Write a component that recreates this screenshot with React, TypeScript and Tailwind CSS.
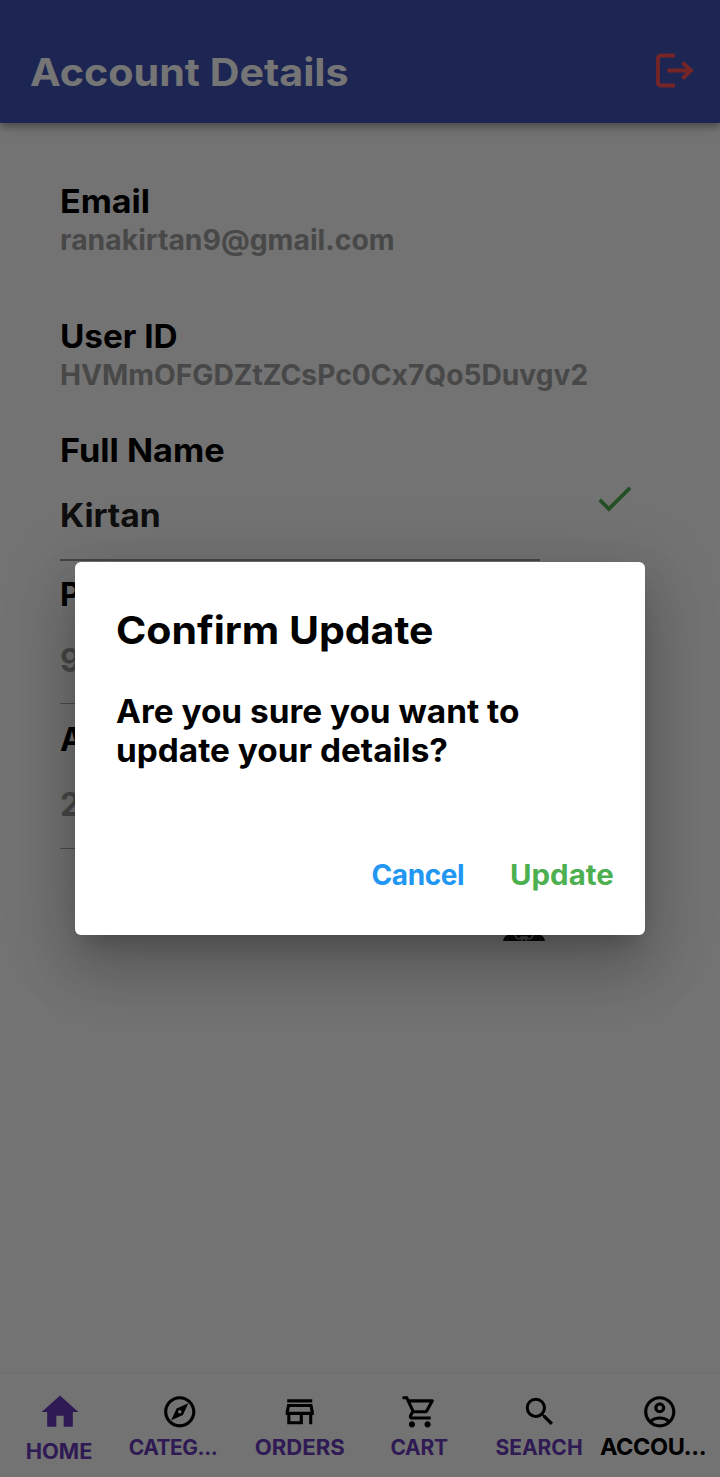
import type { ReactNode } from "react";
import {
  MdCheck,
  MdHome,
  MdOutlineAccountCircle,
  MdOutlineExplore,
  MdOutlineShoppingCart,
  MdOutlineStore,
  MdSearch,
} from "react-icons/md";

function LogoutIcon() {
  return (
    <svg width="45" height="45" viewBox="0 0 45 45" fill="none" stroke="#ff5252" strokeWidth="3.8">
      <path d="M23 6.500H9.500Q6 6.500 6 9.500V33.500Q6 36.500 9.500 36.500H23" />
      <path d="M15.500 21.500H39.500M30.500 13.500L39 21.500L30.500 29.500" />
    </svg>
  );
}

function NavItem({ icon, children }: { icon: ReactNode; children: ReactNode }) {
  return (
    <div className="flex w-[120px] flex-col items-center pt-[19px] text-black">
      {icon}
      {children}
    </div>
  );
}

export default function App() {
  return (
    <div className="relative flex h-[1477px] w-[720px] flex-col overflow-hidden bg-[#fafafa] font-['Inter',sans-serif] font-bold whitespace-nowrap text-black">
      <header className="relative flex h-[123px] shrink-0 items-start justify-between bg-[#3f51b5] pt-[49px] pr-[23px] pl-[30px] shadow-[0_3px_6px_-1.5px_rgba(0,0,0,0.2),0_6px_7.5px_rgba(0,0,0,0.14),0_1.5px_15px_rgba(0,0,0,0.12)]">
        <h1 className="origin-left scale-x-[1.07] text-[38.5px] leading-[46px] text-white">Account Details</h1>
        <LogoutIcon />
      </header>

      <main className="flex grow flex-col pl-[60px]">
        <section className="pt-[59px]">
          <h2 className="origin-left scale-x-[1.065] text-[32px] leading-[40px]">Email</h2>
          <p className="origin-left scale-x-[1.012] text-[28px] leading-[36px] text-[#9e9e9e]">ranakirtan9@gmail.com</p>
        </section>
        <section className="pt-[59px]">
          <h2 className="origin-left scale-x-[1.04] text-[32px] leading-[40px]">User ID</h2>
          <p className="origin-left scale-x-[1.006] text-[28px] leading-[36px] text-[#9e9e9e]">
            HVMmOFGDZtZCsPc0Cx7Qo5Duvgv2
          </p>
        </section>
        <section className="flex h-[168px] pt-[38px]">
          <div className="h-[130px] w-[480px] border-b-2 border-[#9a9a9a]">
            <h2 className="origin-left scale-x-[1.07] text-[32px] leading-[40px]">Full Name</h2>
            <p className="origin-left scale-x-[1.05] pt-[25px] text-[32px] leading-[40px] text-[#202020]">Kirtan</p>
          </div>
          <MdCheck className="mt-[45px] ml-[52px] text-[#4caf50]" size={45} />
        </section>
        <section className="mt-[14px] h-[129px] w-[480px] border-b border-[#a8a8a8]">
          <h2 className="text-[32px] leading-[40px]">P</h2>
          <p className="pt-[26px] text-[32px] leading-[40px] text-[#9e9e9e]">9</p>
        </section>
        <section className="mt-[16px] h-[129px] w-[480px] border-b border-[#a8a8a8]">
          <h2 className="text-[32px] leading-[40px]">A</h2>
          <p className="pt-[25px] text-[32px] leading-[40px] text-[#9e9e9e]">2</p>
        </section>
        <svg className="mt-[71px] ml-[443px]" width="42" height="21" viewBox="0 0 42 21">
          <path d="M0 21Q0.500 17 4 15H38Q41.500 17 42 21Z" fill="#1c1c1c" />
          <path
            d="M12 15Q13 19 17 19L18 17H24L25 19Q29 19 30 15M19 21V18.500H23V21"
            fill="none"
            stroke="#a0a0a0"
            strokeWidth="1.500"
          />
        </svg>
      </main>

      <nav className="flex h-[103px] shrink-0 bg-[#fafafa] text-[#673ab7] shadow-[0_-1px_3px_rgba(0,0,0,0.06)]">
        <NavItem icon={<MdHome size={44} className="-mt-[3px] text-[#673ab7]" />}>
          <span className="mr-px scale-x-[1.04] pt-[5px] text-[21px] leading-[26px] text-[#673ab7]">HOME</span>
        </NavItem>
        <NavItem icon={<MdOutlineExplore size={37.5} />}>
          <span className="mr-[14px] pt-1 text-[21px] leading-[26px] tracking-[-0.5px] text-[#673ab7]">CATEG...</span>
        </NavItem>
        <NavItem icon={<MdOutlineStore size={37.5} />}>
          <span className="scale-x-[1.055] pt-1 text-[21px] leading-[26px] text-[#673ab7]">ORDERS</span>
        </NavItem>
        <NavItem icon={<MdOutlineShoppingCart size={37.5} />}>
          <span className="mr-[2px] pt-1 text-[21px] leading-[26px] tracking-[-0.3px] text-[#673ab7]">CART</span>
        </NavItem>
        <NavItem icon={<MdSearch size={37.5} />}>
          <span className="mr-[2px] pt-1 text-[21px] leading-[26px] text-[#673ab7]">SEARCH</span>
        </NavItem>
        <NavItem icon={<MdOutlineAccountCircle size={37.5} />}>
          <span className="mr-[14px] pt-[3px] text-[23.5px] leading-[26px] tracking-[-0.4px]">ACCOU...</span>
        </NavItem>
      </nav>

      <div className="absolute inset-0 flex items-center justify-center bg-black/54 pt-5">
        <div
          role="dialog"
          className="flex h-[373px] w-[570px] flex-col rounded-[6px] bg-white pt-[44px] pl-[41px] shadow-[0_16.5px_22.5px_-10.5px_rgba(0,0,0,0.2),0_36px_57px_4.5px_rgba(0,0,0,0.14),0_13.5px_69px_12px_rgba(0,0,0,0.12)]"
        >
          <h2 className="origin-left scale-x-[1.065] text-[38.5px] leading-[48px]">Confirm Update</h2>
          <p className="origin-left scale-x-[1.042] pt-[38px] text-[32px] leading-[39px]">
            Are you sure you want to
            <br />
            update your details?
          </p>
          <div className="flex justify-end gap-[51px] pt-[87px] pr-[31px] text-[28px] leading-[36px]">
            <button className="tracking-[-0.4px] text-[#2196f3]">Cancel</button>
            <button className="origin-right scale-x-[1.05] text-[#4caf50]">Update</button>
          </div>
        </div>
      </div>
    </div>
  );
}
